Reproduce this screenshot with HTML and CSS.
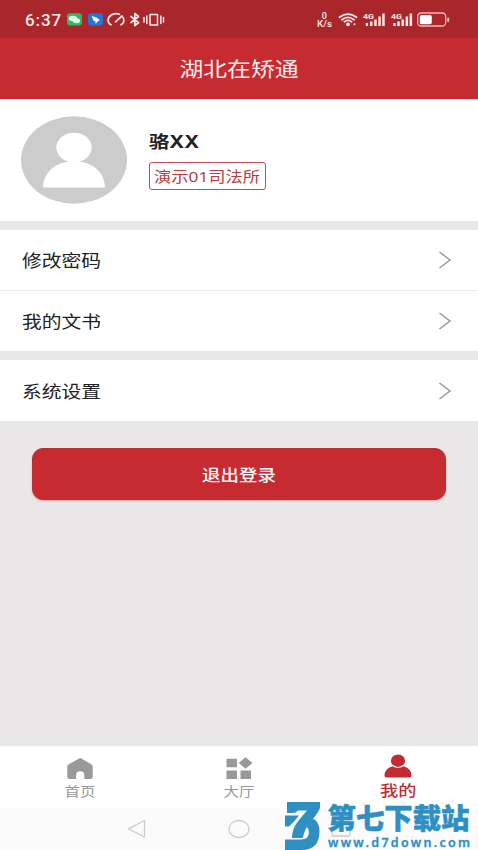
FILE: index.html
```html
<!DOCTYPE html>
<html lang="zh-CN">
<head>
<meta charset="utf-8">
<title>湖北在矫通</title>
<link rel="stylesheet" href="styles.css">
</head>
<body>
<div class="app">
  <div class="status">
    <span class="clock">6:37</span>
    <svg class="status-left" width="100" height="16" viewBox="0 0 100 16">
      <rect x="1" y="1.2" width="15" height="12.4" rx="3" fill="#35b764"/>
      <ellipse cx="7" cy="6.500" rx="4.2" ry="2.8" fill="#dcffe8"/><ellipse cx="10.5" cy="8.800" rx="3.6" ry="2.5" fill="#dcffe8"/>
      <rect x="22" y="1.2" width="15" height="12.4" rx="3" fill="#2874d8"/>
      <path d="M25.5 3.800l6 2.2 2.3 2.2-2.3 1.6-1.7 2.2-.4-2.3-2-1.1z" fill="#eaf5ff"/>
      <g fill="none" stroke="#ffe9e9" stroke-width="1.7" stroke-linecap="round" stroke-linejoin="round">
        <path d="M45 12.800C40.6 10.5 41.5 4.500 46 2.600Q50 1 53.500 2.300M57 5.500C58.8 8.500 57.8 11.2 55 12.800M49.5 9.800L56 4"/>
        <path d="M65 4.500L72.500 10.700 68.800 13.500V1.500L72.500 4.500 65 10.500"/>
        <path d="M84 2.500h7.500v10.500H84zM80.800 4v7.500M78 5.500v4.500M94.800 4v7.500M97.500 5.500v4.500" stroke-width="1.500"/>
      </g>
    </svg>
    <svg class="status-right" width="138" height="20" viewBox="0 0 138 20">
      <g fill="#ffe9e9" font-family="Roboto" font-weight="500">
        <text x="5.800" y="8.500" font-size="9">0</text>
        <text x="1" y="17.300" font-size="8.500" textLength="15" lengthAdjust="spacingAndGlyphs">K/s</text>
        <text x="47" y="9" font-size="8" font-weight="700" textLength="11" lengthAdjust="spacingAndGlyphs">4G</text>
        <text x="75" y="9" font-size="8" font-weight="700" textLength="11" lengthAdjust="spacingAndGlyphs">4G</text>
        <path d="M49.800 13h2.300v3h-2.300zM54 11.500h2.500V16H54zM58.200 9.500h2.500V16h-2.500zM62.300 6.500h2.500V16h-2.500zM66.200 3.500h2.500V16h-2.500zM77.300 13h2.300v3h-2.300zM81.300 11.500h2.500V16h-2.500zM85.500 9.500H88V16h-2.500zM89.600 6.500h2.500V16h-2.500zM93.600 3.500h2.500V16h-2.500z"/>
        <circle cx="32" cy="14.300" r="1.900"/><circle cx="38.500" cy="14.300" r="1"/>
      </g>
      <g fill="none" stroke="#ffe9e9" stroke-width="1.800" stroke-linecap="round">
        <path d="M23.500 7.300Q32 .8 40.500 7.300M26 9.700Q32 5 38 9.700M28.500 11.800Q32 9 35.500 11.800"/>
        <rect x="101.700" y="3" width="28" height="13" rx="3.500" stroke-width="1.300" stroke="#f0b9bb"/>
      </g>
      <rect x="103.800" y="4.900" width="12" height="9.300" rx="1.800" fill="#fff"/>
      <rect x="131.200" y="7.500" width="2" height="4.500" rx="1" fill="#f0c5c6"/>
    </svg>
  </div>
  <header class="header"><span class="wide">湖北在矫通</span></header>

  <section class="profile">
    <svg width="106" height="88" viewBox="0 0 106 88">
      <ellipse cx="53" cy="44" rx="53" ry="43.700" fill="#ccc"/>
      <ellipse cx="53" cy="31.500" rx="17.700" ry="14.800" fill="#fff"/>
      <path d="M22 71.500C22.500 55 36 45.300 53 45.300S83.500 55 84 71.500z" fill="#fff"/>
    </svg>
    <div class="who">
      <div class="name"><span class="wide">骆XX</span></div>
      <div class="office"><span class="wide">演示01司法所</span></div>
    </div>
  </section>

  <nav class="group">
    <div class="row"><span class="wide">修改密码</span><svg class="chev" width="14" height="20" viewBox="0 0 14 20"><path d="M1.500 2L12 10 1.500 18"/></svg></div>
    <div class="row"><span class="wide">我的文书</span><svg class="chev" width="14" height="20" viewBox="0 0 14 20"><path d="M1.500 2L12 10 1.500 18"/></svg></div>
  </nav>
  <nav class="group">
    <div class="row"><span class="wide">系统设置</span><svg class="chev" width="14" height="20" viewBox="0 0 14 20"><path d="M1.500 2L12 10 1.500 18"/></svg></div>
  </nav>

  <button class="logout"><span class="wide">退出登录</span></button>

  <div class="tabs">
    <div class="tab">
      <svg width="28" height="24" viewBox="0 0 28 24"><path d="M13.500 1.200Q14.200.9 15 1.300L25.500 7.500Q26.700 8.300 26.700 9.500V20Q26.700 22 24.500 22H18.300V17.500Q18 14.300 14.200 14.200 10.400 14.300 10.100 17.500V22H3.500Q1.300 22 1.300 20V9.500Q1.300 8.300 2.500 7.500z" fill="#999"/></svg>
      <span class="wide">首页</span>
    </div>
    <div class="tab">
      <svg width="28" height="24" viewBox="0 0 28 24"><path d="M1.500 1.800H12v8.400H1.500zM1.500 13.500H12V22H1.500zM15.500 13.500H26V22H15.500zM20.500.3L27.500 6 20.500 11.700 13.700 6z" fill="#999"/></svg>
      <span class="wide">大厅</span>
    </div>
    <div class="tab active">
      <svg width="28" height="24" viewBox="0 0 28 24"><ellipse cx="14" cy="6.700" rx="7.100" ry="6.200"/><path d="M8.500 12.200Q14 15.700 19.500 12.200 26.500 14 27.500 20.500 27.800 23.500 25 23.500H3Q.200 23.500.500 20.500 1.500 14 8.500 12.200z"/></svg>
      <span class="wide">我的</span>
    </div>
  </div>
  <div class="sysnav">
    <svg width="20" height="20" viewBox="0 0 20 20"><path d="M17.500 1.500V18L1.500 9.800z"/></svg>
    <svg width="22" height="20" viewBox="0 0 22 20"><ellipse cx="11" cy="10" rx="10" ry="8.500"/></svg>
    <svg width="20" height="20" viewBox="0 0 20 20"><rect x="1" y="2" width="18" height="15" rx="1"/></svg>
  </div>

  <svg class="mark" width="194" height="50" viewBox="0 0 194 50">
    <g fill="#2f8fc3">
      <path d="M3 2H36V8Q34 13 28 20 20 29 19 38H8Q8 28 15 20L23 10.500H14Q12 13 8 13H3z"/>
      <path d="M1 15.500H15Q11 21 5 26.500H1zM1 39.500H17Q25 39.500 25 32 25 29 22.500 26.500L29 18.500Q35.500 22 35.500 31 35.500 50 18 50H1z"/>
      <text x="43.500" y="29" class="mark-name" textLength="142" lengthAdjust="spacingAndGlyphs">第七下载站</text>
      <text x="44" y="47.300" class="mark-url" textLength="142">www.d7down.com</text>
    </g>
  </svg>
</div>
</body>
</html>
```
FILE: styles.css
```css
* { box-sizing: border-box; }
body {
  margin: 0;
  font-family: "Noto Sans", "Noto Sans CJK SC", sans-serif;
  color: #222;
}
.app {
  position: relative;
  width: 478px;
  height: 850px;
  display: flex;
  flex-direction: column;
  background: #e9e7e8;
  overflow: hidden;
}
.wide { display: inline-block; transform: scaleX(1.19); white-space: nowrap; }

.status {
  height: 38px;
  flex: none;
  display: flex;
  align-items: center;
  padding: 2px 24px 0 25px;
  background: #a9262b;
}
.clock {
  width: 41px;
  font: 500 17px/20px Roboto, sans-serif;
  letter-spacing: .9px;
  color: #ffe9e9;
}
.status-right { margin-left: auto; }

.header {
  height: 61px;
  flex: none;
  display: flex;
  align-items: center;
  justify-content: center;
  background: #c62b31;
  color: #ffecec;
  font: 400 20px "Noto Sans CJK SC", sans-serif;
}

.profile {
  height: 122px;
  flex: none;
  display: flex;
  align-items: center;
  gap: 22px;
  padding: 0 21px;
  background: #fff;
}
.who .wide { transform-origin: left center; }
.name { height: 24px; margin: 0 0 8px; font: 700 17px/24px Inter, "Noto Sans CJK SC", sans-serif; }
.office {
  width: 117px;
  height: 28px;
  padding-left: 4px;
  border: 1px solid #c04a4e;
  border-radius: 3px;
  color: #b63c40;
  font-size: 14.500px;
  line-height: 26px;
}

.group { flex: none; margin-top: 9px; background: #fff; }
.row {
  height: 61px;
  display: flex;
  align-items: center;
  justify-content: space-between;
  padding: 0 26px 0 21.500px;
  font: 400 16.600px "Noto Sans CJK SC", sans-serif;
}
.row .wide { transform-origin: left center; }
.row:first-child { height: 60px; }
.row + .row { border-top: 1px solid #ececec; }
.row:only-child { height: 61px; }
.chev { fill: none; stroke: #999; stroke-width: 1.500; }

.logout {
  width: 414px;
  height: 52px;
  flex: none;
  margin: 27px 0 0 32px;
  border: 1px solid #b82e34;
  border-radius: 11px;
  background: #c62b31;
  box-shadow: 0 1px 2px #e0a9ab;
  color: #fff;
  font: 500 15.500px "Noto Sans CJK SC", sans-serif;
}

.tabs {
  height: 62px;
  flex: none;
  margin-top: auto;
  display: grid;
  grid-template-columns: repeat(3, 1fr);
  background: #fff;
}
.tab {
  display: flex;
  flex-direction: column;
  align-items: center;
  padding-top: 11px;
  color: #999;
  font-size: 13px;
  line-height: 20px;
}
.tab.active { padding-top: 8px; color: #b83035; fill: #c22b31; font-size: 15.300px; font-weight: 500; }
.tab.active .wide { margin-top: 3px; line-height: 18px; }

.sysnav {
  height: 42px;
  flex: none;
  display: flex;
  align-items: center;
  justify-content: center;
  gap: 81px;
  background: #fbfbfb;
  fill: none;
  stroke: #ccc;
  stroke-width: 1.300;
  stroke-linejoin: round;
}

.mark { position: absolute; left: 284px; top: 800px; }
.mark-name {
  font: 900 28.500px "Noto Sans CJK SC", sans-serif;
  stroke: #2f8fc3;
  stroke-width: .5px;
}
.mark-url { font: 600 12.500px "Noto Sans", sans-serif; stroke: #2f8fc3; stroke-width: .3px; }
```
